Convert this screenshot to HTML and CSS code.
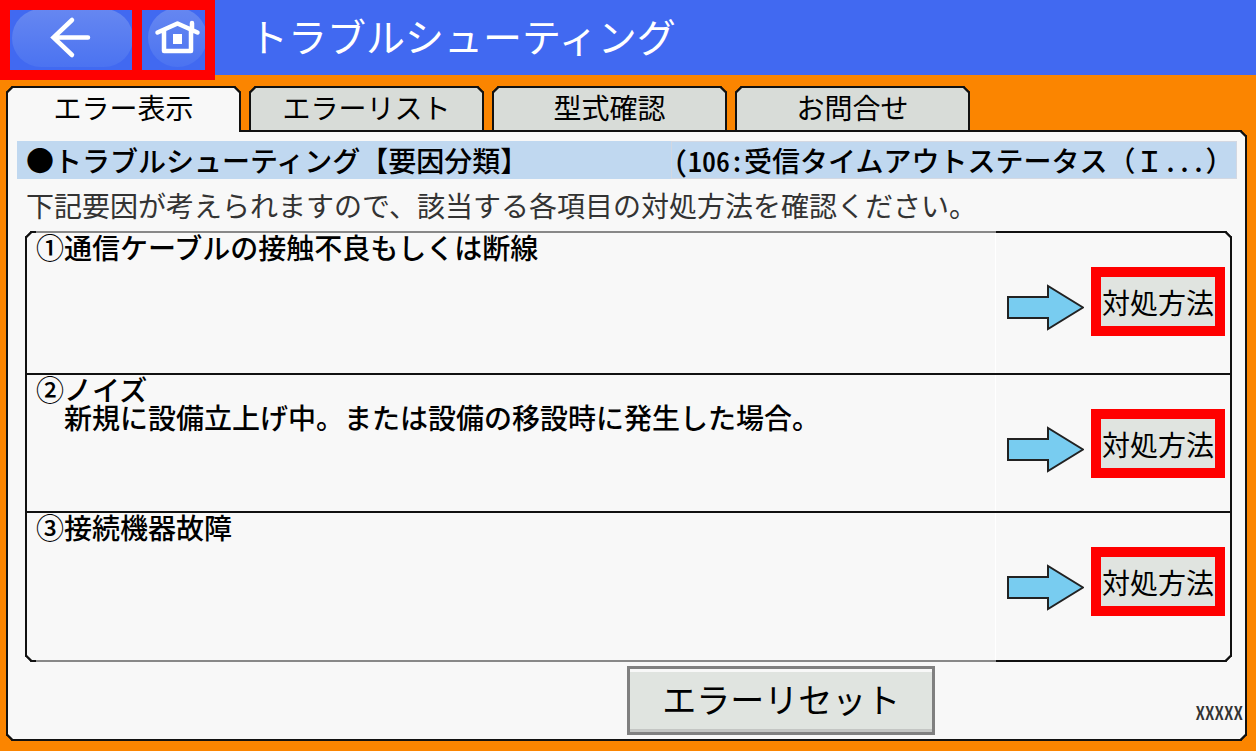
FILE: index.html
```
<!DOCTYPE html>
<html lang="ja">
<head>
    <meta charset="UTF-8">
    <meta name="viewport" content="width=device-width, initial-scale=1.0">
    <title>トラブルシューティング</title>
    <link rel="stylesheet" href="styles.css">
</head>
<body>
    <header class="header">
        <nav class="header-nav">
            <button type="button" class="nav-button back" aria-label="戻る">
                <svg width="122" height="60" viewBox="0 0 122 60">
                    <defs>
                        <linearGradient id="shine" x1="0" y1="0" x2="0" y2="1">
                            <stop offset="0" stop-color="#6687f1"/>
                            <stop offset="1" stop-color="#4b73f1"/>
                        </linearGradient>
                    </defs>
                    <rect x="2" y="-1" width="121" height="58" rx="29" fill="url(#shine)"/>
                    <path d="M62 10L43.500 27.500L62 45M44 27.500H78" fill="none" stroke="#fff" stroke-width="4.500" stroke-linecap="round"/>
                </svg>
            </button>
            <button type="button" class="nav-button home" aria-label="ホーム">
                <svg width="63" height="60" viewBox="0 0 63 60">
                    <circle cx="35.500" cy="27.500" r="29.500" fill="url(#shine)"/>
                    <path d="M15.500 22.500L35.500 13.500L55.500 22.500M50 13V19M22 21V41H49V21" fill="none" stroke="#fff" stroke-width="4.500" stroke-linecap="round" stroke-linejoin="round"/>
                    <rect x="31" y="24" width="9" height="10" fill="#fff"/>
                </svg>
            </button>
        </nav>
        <h1>トラブルシューティング</h1>
    </header>

    <main class="main">
        <div class="tabs" role="tablist">
            <button type="button" class="tab active" role="tab" aria-selected="true">エラー表示</button>
            <button type="button" class="tab" role="tab" aria-selected="false">エラーリスト</button>
            <button type="button" class="tab" role="tab" aria-selected="false">型式確認</button>
            <button type="button" class="tab" role="tab" aria-selected="false">お問合せ</button>
        </div>

        <section class="panel">
            <div class="title-bar">
                <h2>●トラブルシューティング【要因分類】</h2>
                <p class="error-name"><span class="half">(106:</span>受信タイムアウトステータス（Ｉ<span class="half">...</span>）</p>
            </div>
            <p class="guide">下記要因が考えられますので、該当する各項目の対処方法を確認ください。</p>

            <ul class="causes">
                <li class="cause">
                    <p class="cause-text">①通信ケーブルの接触不良もしくは断線</p>
                    <div class="cause-action">
                        <svg class="arrow" width="78" height="69" viewBox="0 0 78 69"><path d="M2 30H42V19L77 40.500L42 62V51H2Z"/></svg>
                        <button type="button" class="solution">対処方法</button>
                    </div>
                </li>
                <li class="cause">
                    <p class="cause-text">②ノイズ<br>　新規に設備立上げ中。または設備の移設時に発生した場合。</p>
                    <div class="cause-action">
                        <svg class="arrow" width="78" height="69" viewBox="0 0 78 69"><path d="M2 30H42V19L77 40.500L42 62V51H2Z"/></svg>
                        <button type="button" class="solution">対処方法</button>
                    </div>
                </li>
                <li class="cause">
                    <p class="cause-text">③接続機器故障</p>
                    <div class="cause-action">
                        <svg class="arrow" width="78" height="69" viewBox="0 0 78 69"><path d="M2 30H42V19L77 40.500L42 62V51H2Z"/></svg>
                        <button type="button" class="solution">対処方法</button>
                    </div>
                </li>
            </ul>

            <div class="panel-footer">
                <button type="button" class="reset">エラーリセット</button>
                <span class="code half">XXXXX</span>
            </div>
        </section>
    </main>
</body>
</html>
```
FILE: styles.css
```
* {
    margin: 0;
    padding: 0;
    box-sizing: border-box;
}

body {
    display: flex;
    flex-direction: column;
    min-height: 100vh;
    background-color: #fb8500;
    color: #000;
    font-family: "Noto Sans CJK JP", sans-serif;
    font-size: 28px;
    line-height: 28px;
}

button {
    font-family: inherit;
    font-size: 28px;
    line-height: 28px;
    color: #000;
    cursor: pointer;
}

svg {
    display: block;
}

/* half-width letters and digits */
.half {
    font-feature-settings: "hwid";
}

/* header */
.header {
    display: flex;
    align-items: flex-start;
    height: 75px;
    background-color: #4169f1;
}

.header-nav {
    display: flex;
    position: relative;
    z-index: 1;
}

.nav-button {
    height: 80px;
    border: 10px solid #f00;
    background-color: #4169f1;
}

.home {
    margin-left: -10px;
}

.header h1 {
    margin-left: 34px;
    color: #fff;
    font-size: 39px;
    font-weight: 400;
    line-height: 70px;
}

/* tabs */
.main {
    display: flex;
    flex-direction: column;
    flex: 1;
    padding: 11px 9px 10px 6px;
}

.tabs {
    display: flex;
    gap: 8px;
}

.tab {
    flex: 0 1 235px;
    height: 44px;
    padding-bottom: 4px;
    border: 2px solid #111;
    border-bottom: none;
    border-radius: 6px 6px 0 0;
    corner-shape: bevel;
    background-color: #d8dcd8;
}

.tab.active {
    position: relative;
    height: 46px;
    margin-bottom: -2px;
    padding-bottom: 6px;
    background-color: #f8f8f8;
}

/* panel */
.panel {
    flex: 1;
    border: 2px solid #111;
    border-radius: 0 6px 6px 6px;
    corner-shape: bevel;
    background-color: #f8f8f8;
}

.title-bar {
    display: flex;
    justify-content: space-between;
    margin: 9px 8px 0 9px;
    padding-left: 9px;
    background-color: #c0d8f0;
    line-height: 38px;
}

.title-bar h2 {
    font-size: 28px;
    font-weight: 500;
}

.error-name {
    width: 566px;
    padding-left: 2px;
    border: 1px solid #d3d8e2;
    font-weight: 500;
    line-height: 36px;
}

.guide {
    margin: 12px 18px;
    color: #333;
}

.causes {
    position: relative;
    margin: 0 13px 0 17px;
    border: 2px solid #111;
    border-radius: 6px;
    corner-shape: bevel;
    list-style: none;
}

/* paler part of the frame above and below the texts */
.causes::before,
.causes::after {
    content: "";
    position: absolute;
    left: 9px;
    right: 234px;
    height: 2px;
    background-color: #888;
}

.causes::before {
    top: -2px;
}

.causes::after {
    bottom: -2px;
}

.cause {
    display: flex;
    min-height: 138px;
    border-bottom: 2px solid #111;
}

.cause:first-child {
    min-height: 142px;
}

.cause:last-child {
    min-height: 147px;
    border-bottom: none;
}

.cause-text {
    flex: 1;
    padding-left: 9px;
    border-right: 1px solid #fff;
    font-weight: 500;
}

.cause-action {
    display: flex;
    align-items: flex-start;
    gap: 7px;
    padding: 34px 5px 0 10px;
}

.arrow path {
    fill: #78ccf0;
    stroke: #222;
    stroke-width: 2;
}

.solution {
    width: 134px;
    height: 69px;
    border: 10px solid #f00;
    background-color: #e0e4e0;
}

.panel-footer {
    display: grid;
    grid-template-columns: 2fr 308px 1fr;
    align-items: center;
    padding-top: 4px;
}

.reset {
    grid-column: 2;
    height: 69px;
    padding-bottom: 4px;
    border: 3px solid #808080;
    background-color: #e0e4e0;
    box-shadow: inset 0 3px #f8f8f8, inset 0 -3px #c4c6c4;
    font-size: 34px;
}

.code {
    margin-top: 22px;
    padding-right: 2px;
    color: #333;
    font-size: 19px;
    font-weight: 500;
    text-align: right;
}
```
